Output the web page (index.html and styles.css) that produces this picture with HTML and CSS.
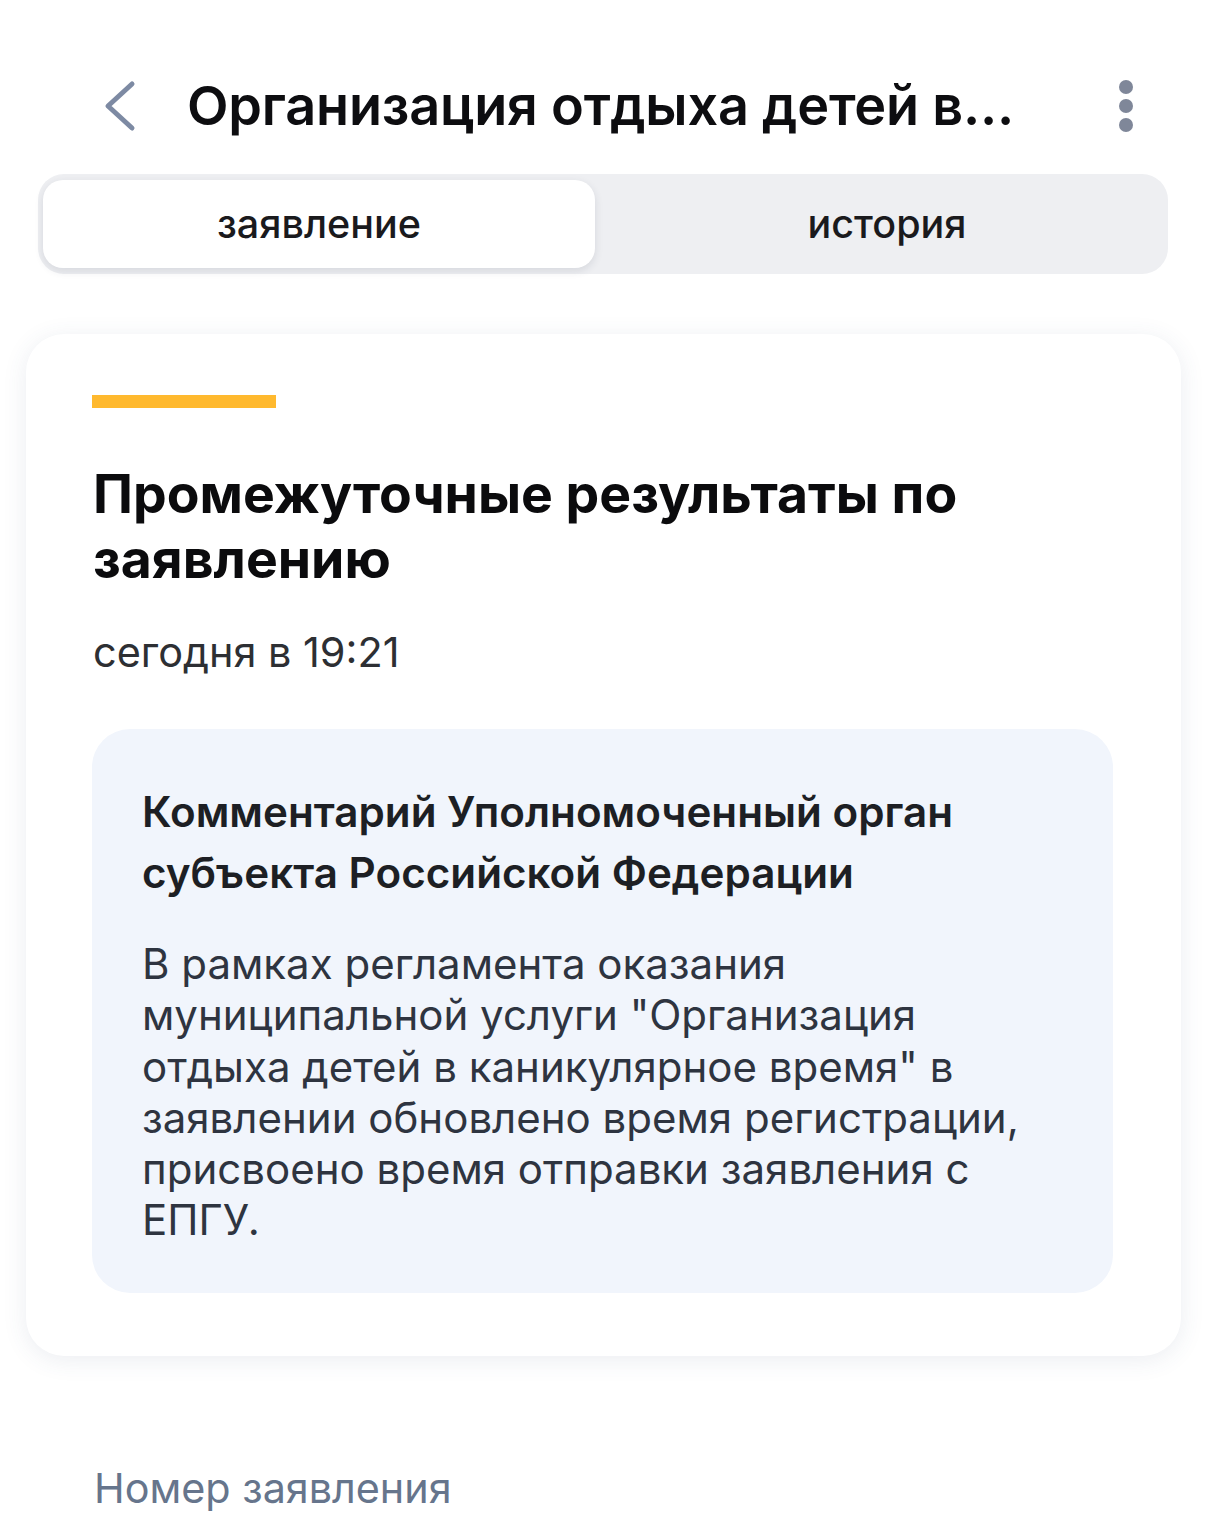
FILE: index.html
```html
<!DOCTYPE html>
<html lang="ru">
<head>
<meta charset="utf-8">
<title>Организация отдыха детей</title>
<link rel="stylesheet" href="styles.css">
</head>
<body>
<div class="page">
  <header class="topbar">
    <button class="back" aria-label="Назад">
      <svg width="40" height="60" viewBox="0 0 40 60"><path d="M32 8 L8 30 L32 52" fill="none" stroke="#7d8aa3" stroke-width="5" stroke-linecap="round" stroke-linejoin="round"/></svg>
    </button>
    <h1 class="title">Организация отдыха детей в...</h1>
    <button class="more" aria-label="Меню">
      <span class="dot"></span><span class="dot"></span><span class="dot"></span>
    </button>
  </header>

  <nav class="tabs">
    <div class="tab tab-active">заявление</div>
    <div class="tab tab-other">история</div>
  </nav>

  <section class="card">
    <div class="accent"></div>
    <h2 class="card-title">Промежуточные результаты по заявлению</h2>
    <div class="date">сегодня в 19:21</div>
    <div class="comment">
      <h3 class="comment-title">Комментарий Уполномоченный орган субъекта Российской Федерации</h3>
      <p class="comment-text">В рамках регламента оказания муниципальной услуги "Организация отдыха детей в каникулярное время" в заявлении обновлено время регистрации, присвоено время отправки заявления с ЕПГУ.</p>
    </div>
  </section>

  <div class="field-label">Номер заявления</div>
</div>
</body>
</html>
```

FILE: styles.css
```css
* { box-sizing: border-box; }
html, body { margin: 0; padding: 0; background: #ffffff; }
body {
  font-family: "Inter", "Noto Sans", sans-serif;
  color: #0b0b0d;
  -webkit-font-smoothing: antialiased;
}
.page {
  width: 1206px;
  height: 1525px;
  overflow: hidden;
  padding-top: 44px;
}
.topbar {
  height: 124px;
  display: flex;
  align-items: center;
  padding: 0 60px 0 100px;
}
.back {
  border: 0;
  background: none;
  padding: 0;
  width: 40px;
  height: 60px;
  display: flex;
}
.title {
  flex: 1;
  margin: 0 0 0 47px;
  font-size: 54px;
  font-weight: 600;
  letter-spacing: -0.2px;
  line-height: 1.2;
  color: #0d0d10;
  white-space: nowrap;
}
.more {
  border: 0;
  background: none;
  padding: 0;
  width: 14px;
  display: flex;
  flex-direction: column;
  gap: 5px;
  margin-right: 13px;
}
.dot {
  width: 14px;
  height: 14px;
  border-radius: 50%;
  background: #7f8799;
}
.tabs {
  margin: 6px 38px 0 38px;
  height: 100px;
  background: #eeeff2;
  border-radius: 26px;
  padding: 6px 5px;
  display: grid;
  grid-template-columns: 552px 1fr;
}
.tab {
  display: flex;
  align-items: center;
  justify-content: center;
  font-size: 39.5px;
  font-weight: 500;
  color: #1a1a1d;
  border-radius: 20px;
}
.tab-other {
  padding-left: 16px;
}
.tab-active {
  background: #ffffff;
  box-shadow: 0 3px 8px rgba(40, 50, 70, 0.12);
}
.card {
  margin: 60px 25px 0 26px;
  height: 1022px;
  background: #ffffff;
  border-radius: 38px;
  box-shadow: 0 4px 24px rgba(60, 80, 120, 0.10);
  padding: 61px 68px 0 66px;
}
.accent {
  width: 184px;
  height: 13px;
  background: #ffb92e;
}
.card-title {
  margin: 53px 0 0 1px;
  font-size: 53.5px;
  font-weight: 700;
  line-height: 65px;
  color: #0b0b0d;
}
.date {
  margin: 36px 0 0 1px;
  font-size: 41.4px;
  line-height: 50px;
  color: #2d2f33;
}
.comment {
  margin-top: 52px;
  background: #f1f5fc;
  border-radius: 38px;
  padding: 52px 70px 47px 50px;
}
.comment-title {
  margin: 0;
  font-size: 42.2px;
  font-weight: 600;
  line-height: 61px;
  color: #1d1f24;
}
.comment-text {
  margin: 35px 0 0 0;
  font-size: 42px;
  line-height: 51.3px;
  color: #2e3440;
}
.field-label {
  margin: 107px 0 0 94px;
  font-size: 41.3px;
  line-height: 50px;
  color: #66758c;
}
```
